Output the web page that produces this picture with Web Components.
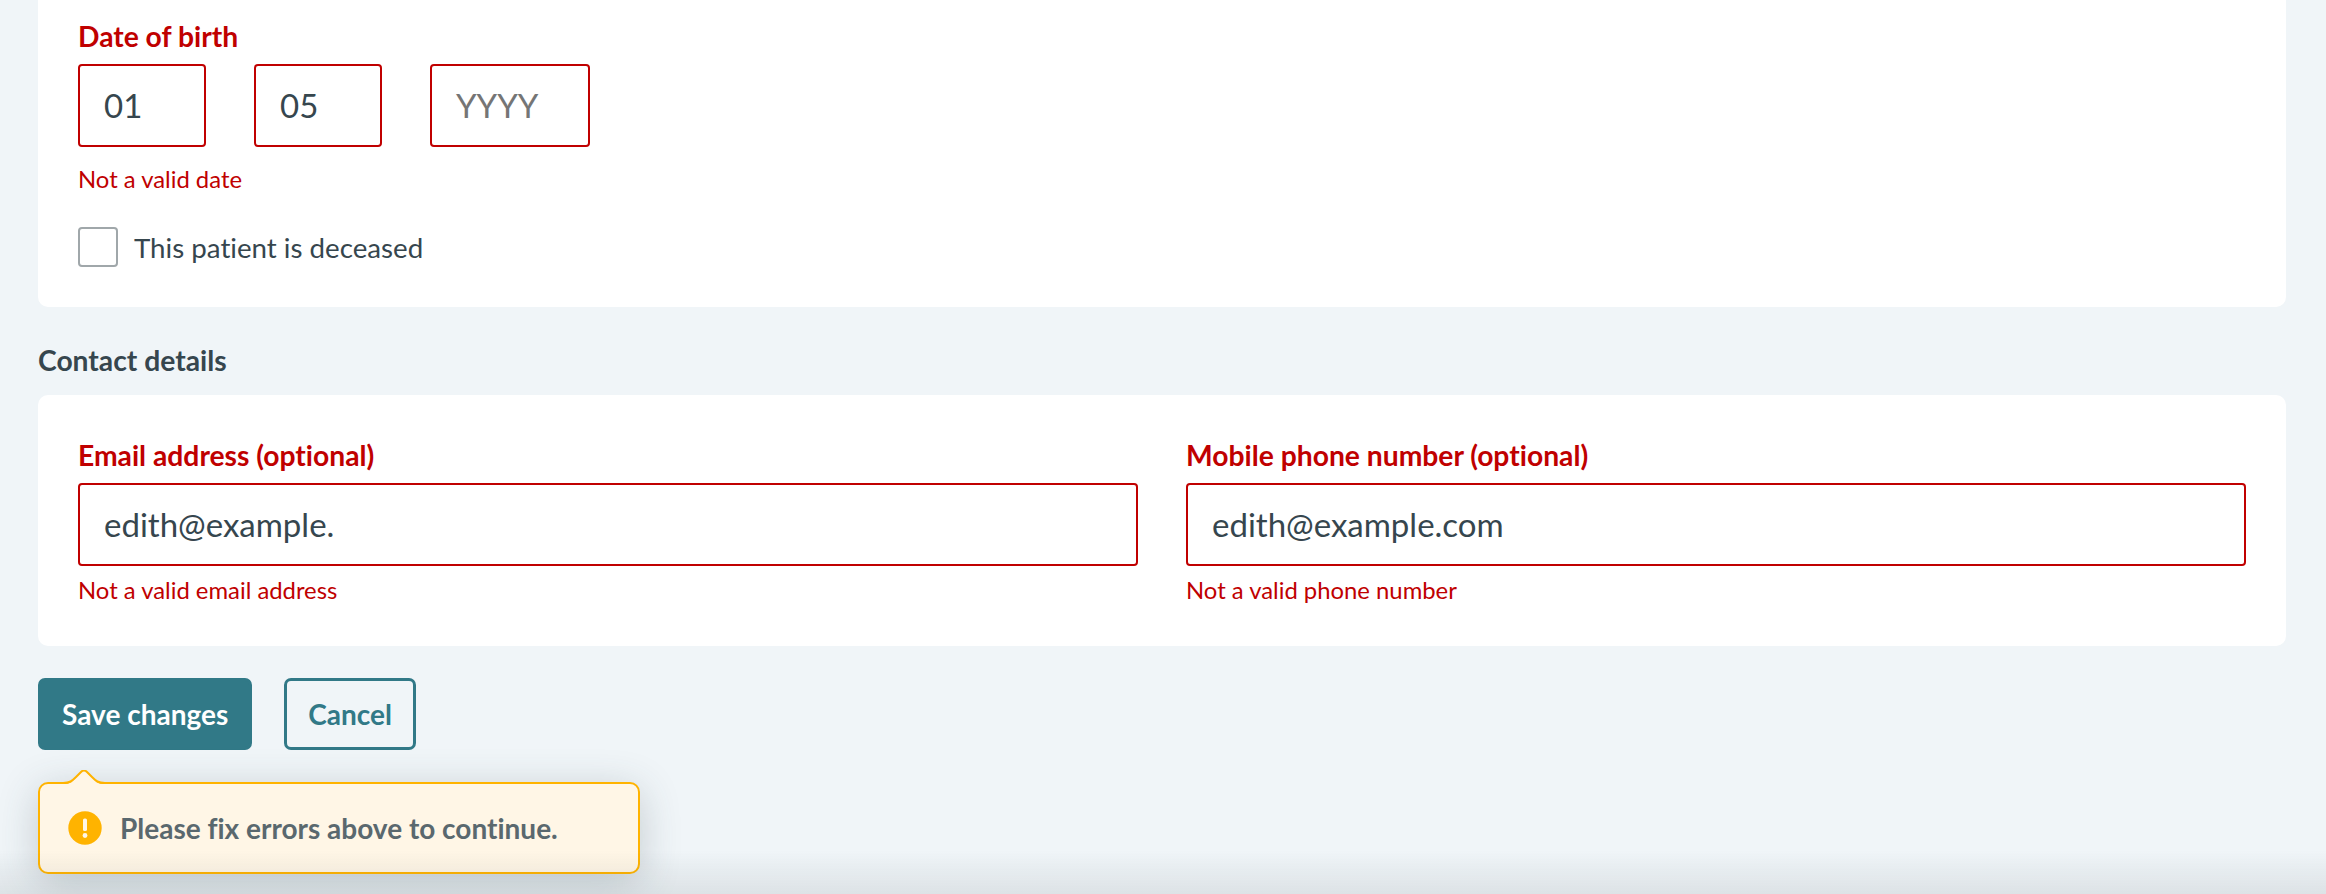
<!DOCTYPE html>
<html lang="en">
<head>
<meta charset="utf-8">
<title>Edit patient</title>
<style>
  html, body { margin: 0; height: 100%; overflow: hidden; }
  body { background: #f0f5f8; font-family: Lato, "Open Sans", sans-serif; color: #36464e; font-variant-ligatures: none; }
</style>
</head>
<body>
<patient-form>
  <form-card>
    <date-field label="Date of birth" error="Not a valid date"></date-field>
    <check-field label="This patient is deceased"></check-field>
  </form-card>
  <section-title>Contact details</section-title>
  <form-card top>
    <div slot="columns">
      <text-field label="Email address (optional)" value="edith@example." error="Not a valid email address"></text-field>
    </div>
    <div slot="columns">
      <text-field label="Mobile phone number (optional)" value="edith@example.com" error="Not a valid phone number"></text-field>
    </div>
  </form-card>
  <form-actions>
    <app-button primary>Save changes</app-button>
    <app-button>Cancel</app-button>
    <warn-toast slot="toast">Please fix errors above to continue.</warn-toast>
  </form-actions>
</patient-form>
<bottom-fade></bottom-fade>

<script>
// shared bits for the fields
const fieldCss = `
  .label { display: block; font-size: 28.25px; line-height: 32px; font-weight: 700; color: #c00000; margin-bottom: 12px; }
  .box {
    box-sizing: border-box; height: 83px; border: 2px solid #c00000; border-radius: 4px;
    background: #fff; padding: 0 24px 2px; display: flex; align-items: center;
    font-size: 33px; color: #36464e; white-space: nowrap; overflow: hidden;
  }
  .box.empty { color: #757575; }
  .error { font-size: 23.85px; line-height: 30px; color: #c00000; }
`;

class PatientForm extends HTMLElement {
  constructor() {
    super();
    this.attachShadow({ mode: "open" }).innerHTML = `
      <style>:host { display: block; padding: 0 40px 0 38px; }</style>
      <slot></slot>`;
  }
}

class FormCard extends HTMLElement {
  constructor() {
    super();
    this.attachShadow({ mode: "open" }).innerHTML = `
      <style>
        :host { display: block; background: #fff; border-radius: 0 0 10px 10px; padding: 20px 40px 40px; }
        :host([top]) { border-radius: 10px; padding: 44px 40px 41px; }
        .cols { display: grid; grid-template-columns: 1fr 1fr; gap: 48px; }
      </style>
      <slot></slot>
      <div class="cols"><slot name="columns"></slot></div>`;
  }
}

class SectionTitle extends HTMLElement {
  constructor() {
    super();
    this.attachShadow({ mode: "open" }).innerHTML = `
      <style>:host { display: block; margin: 36px 0 18px; font-size: 28.25px; line-height: 34px; font-weight: 700; }</style>
      <slot></slot>`;
  }
}

class DateField extends HTMLElement {
  constructor() {
    super();
    this.attachShadow({ mode: "open" }).innerHTML = `
      <style>
        :host { display: block; }
        ${fieldCss}
        .row { display: flex; gap: 48px; }
        .box { width: 128px; }
        .box.year { width: 160px; }
        .error { margin-top: 17px; }
      </style>
      <span class="label">${this.getAttribute("label")}</span>
      <div class="row">
        <div class="box" role="textbox">01</div>
        <div class="box" role="textbox">05</div>
        <div class="box year empty" role="textbox">YYYY</div>
      </div>
      <div class="error">${this.getAttribute("error")}</div>`;
  }
}

class TextField extends HTMLElement {
  constructor() {
    super();
    this.attachShadow({ mode: "open" }).innerHTML = `
      <style>
        :host { display: block; }
        ${fieldCss}
        .error { margin-top: 9px; }
      </style>
      <span class="label">${this.getAttribute("label")}</span>
      <div class="box" role="textbox">${this.getAttribute("value")}</div>
      <div class="error">${this.getAttribute("error")}</div>`;
  }
}

class CheckField extends HTMLElement {
  constructor() {
    super();
    this.attachShadow({ mode: "open" }).innerHTML = `
      <style>
        :host { display: flex; align-items: center; gap: 16px; margin-top: 33px; font-size: 27.7px; }
        .check { box-sizing: border-box; width: 40px; height: 40px; border: 2px solid #a0a7aa; border-radius: 4px; background: #fff; }
      </style>
      <span class="check"></span>
      <span>${this.getAttribute("label")}</span>`;
  }
}

class FormActions extends HTMLElement {
  constructor() {
    super();
    this.attachShadow({ mode: "open" }).innerHTML = `
      <style>
        :host { display: block; position: relative; margin-top: 32px; }
        .row { display: flex; gap: 32px; }
      </style>
      <div class="row"><slot></slot></div>
      <slot name="toast"></slot>`;
  }
}

class AppButton extends HTMLElement {
  constructor() {
    super();
    this.attachShadow({ mode: "open" }).innerHTML = `
      <style>
        :host {
          box-sizing: border-box; display: flex; align-items: center; height: 72px; padding: 0 21px;
          border: 3px solid #317987; border-radius: 7px; color: #317987;
          font-size: 28px; font-weight: 700;
        }
        :host([primary]) { background: #317987; color: #fff; }
      </style>
      <slot></slot>`;
  }
}

class WarnToast extends HTMLElement {
  constructor() {
    super();
    this.attachShadow({ mode: "open" }).innerHTML = `
      <style>
        :host {
          position: absolute; left: 0; top: 104px; box-sizing: border-box; width: 602px; height: 92px;
          display: flex; align-items: center; gap: 18px; padding: 0 27px 0 28px;
          background: #fff6e6; border: 2.5px solid #ffb300; border-radius: 10px;
          box-shadow: 0 8px 40px rgba(54, 70, 78, .24);
          color: #5a686e; font-size: 28px; font-weight: 700;
        }
        .tip { position: absolute; left: 23px; top: -14px; width: 42px; height: 14px; display: block; }
        .icon { flex: none; display: block; }
      </style>
      <svg class="tip" viewBox="0 0 42 14">
        <path d="M0 14 C7 14 9 12 13 8 L18 3 Q21 0 24 3 L29 8 C33 12 35 14 42 14 L42 16 L0 16 Z" fill="#fff6e6"/>
        <path d="M0 13 C7 13 9 11 13 7 L18 2 Q21 -1 24 2 L29 7 C33 11 35 13 42 13" fill="none" stroke="#ffb300" stroke-width="2"/>
      </svg>
      <svg class="icon" width="34" height="34" viewBox="0 0 34 34">
        <circle cx="17" cy="17" r="16.7" fill="#ffb300"/>
        <rect x="15" y="7.5" width="4" height="12.5" rx="1.6" fill="#fff6e6"/>
        <circle cx="17" cy="24.5" r="2.4" fill="#fff6e6"/>
      </svg>
      <span><slot></slot></span>`;
  }
}

class BottomFade extends HTMLElement {
  constructor() {
    super();
    this.attachShadow({ mode: "open" }).innerHTML = `
      <style>
        :host {
          position: fixed; left: 0; right: 0; bottom: 0; height: 44px; pointer-events: none;
          background: linear-gradient(to bottom, rgba(54, 70, 78, 0), rgba(54, 70, 78, .1));
        }
      </style>`;
  }
}

customElements.define("patient-form", PatientForm);
customElements.define("form-card", FormCard);
customElements.define("section-title", SectionTitle);
customElements.define("date-field", DateField);
customElements.define("text-field", TextField);
customElements.define("check-field", CheckField);
customElements.define("form-actions", FormActions);
customElements.define("app-button", AppButton);
customElements.define("warn-toast", WarnToast);
customElements.define("bottom-fade", BottomFade);
</script>
</body>
</html>
